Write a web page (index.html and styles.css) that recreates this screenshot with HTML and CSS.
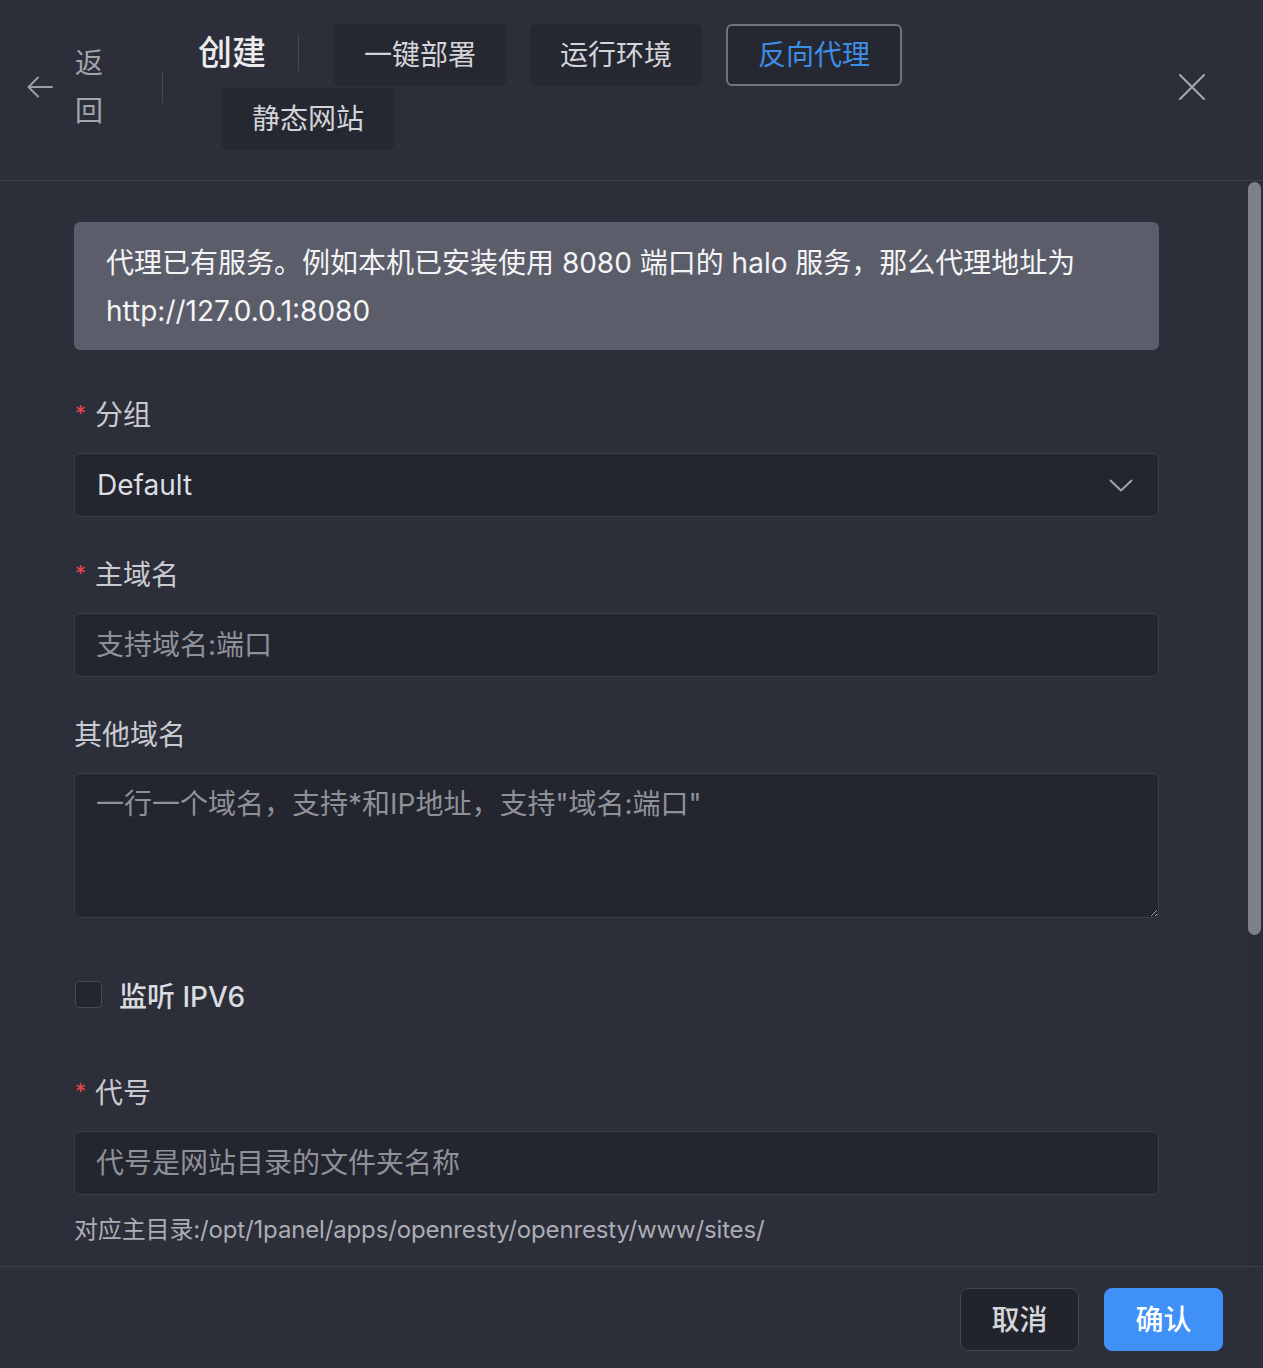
FILE: index.html
```html
<!DOCTYPE html>
<html lang="zh-CN">
<head>
<meta charset="utf-8">
<title>创建 - 反向代理</title>
<link rel="stylesheet" href="styles.css">
</head>
<body>
<div class="dialog">
  <header class="hdr">
    <div class="back">
      <svg class="back-ico" width="26" height="22" viewBox="0 0 26 22"><path d="M25 11 H1.5 M11 1.5 L1.5 11 L11 20.5" fill="none" stroke="currentColor" stroke-width="2" stroke-linecap="round" stroke-linejoin="round"/></svg>
      <span class="back-txt">返回</span>
    </div>
    <span class="vdiv"></span>
    <div class="title-wrap">
      <h1 class="title">创建</h1>
      <span class="vdiv2"></span>
      <button class="tab">一键部署</button>
      <button class="tab">运行环境</button>
      <button class="tab active">反向代理</button>
      <button class="tab">静态网站</button>
    </div>
    <button class="close" aria-label="关闭">
      <svg width="26" height="26" viewBox="0 0 26 26"><path d="M1 1 L25 25 M25 1 L1 25" fill="none" stroke="currentColor" stroke-width="2" stroke-linecap="round"/></svg>
    </button>
  </header>

  <main class="main">
    <div class="content">
      <div class="alert">代理已有服务。例如本机已安装使用 8080 端口的 halo 服务，那么代理地址为 http://127.0.0.1:8080</div>

      <div class="item">
        <div class="label"><span class="req">*</span>分组</div>
        <div class="select">
          <span class="sel-val">Default</span>
          <svg class="chev" width="24" height="13" viewBox="0 0 24 13"><path d="M1.5 1.5 L12 11.5 L22.5 1.5" fill="none" stroke="currentColor" stroke-width="2" stroke-linecap="round" stroke-linejoin="round"/></svg>
        </div>
      </div>

      <div class="item">
        <div class="label"><span class="req">*</span>主域名</div>
        <input class="input" type="text" placeholder="支持域名:端口">
      </div>

      <div class="item">
        <div class="label">其他域名</div>
        <textarea class="textarea" placeholder="一行一个域名，支持*和IP地址，支持&quot;域名:端口&quot;"></textarea>
      </div>

      <div class="item check-row">
        <span class="checkbox"></span>
        <span class="check-label">监听 IPV6</span>
      </div>

      <div class="item">
        <div class="label"><span class="req">*</span>代号</div>
        <input class="input" type="text" placeholder="代号是网站目录的文件夹名称">
        <div class="help">对应主目录:/opt/1panel/apps/openresty/openresty/www/sites/</div>
      </div>
    </div>
    <div class="scrollbar"><div class="thumb"></div></div>
  </main>

  <footer class="ftr">
    <button class="btn cancel">取消</button>
    <button class="btn primary">确认</button>
  </footer>
</div>
</body>
</html>
```

FILE: styles.css
```css
* { box-sizing: border-box; }
html, body { margin: 0; padding: 0; }
body {
  background: #2c2e3a;
  font-family: Inter, "Noto Sans CJK SC", "Noto Sans", sans-serif;
  color: #d4d5d9;
}
.dialog {
  width: 1263px;
  height: 1368px;
  display: flex;
  flex-direction: column;
  background: #2c2e3a;
  overflow: hidden;
}

/* Header */
.hdr {
  height: 181px;
  flex: 0 0 181px;
  display: flex;
  align-items: center;
  padding-left: 27px;
  padding-bottom: 6px;
  border-bottom: 1px solid #3c3f4a;
}
.back {
  display: flex;
  align-items: center;
  color: #9c9ea5;
}
.back-ico { display: block; }
.back-txt {
  width: 28px;
  margin-left: 22px;
  font-size: 28px;
  line-height: 48px;
  color: #a3a5ab;
}
.vdiv {
  width: 1px;
  height: 31px;
  margin-left: 59px;
  background: #454853;
}
.title-wrap {
  width: 740px;
  margin-left: 35px;
  display: flex;
  flex-wrap: wrap;
  align-items: center;
  row-gap: 2px;
  align-self: flex-start;
  margin-top: 24px;
}
.title {
  margin: 0;
  font-size: 34px;
  font-weight: 500;
  line-height: 58px;
  height: 62px;
  color: #ececee;
  padding-bottom: 4px;
}
.vdiv2 {
  width: 1px;
  height: 37px;
  margin-left: 32px;
  margin-right: 11px;
  margin-top: -6px;
  background: #454853;
}
.tab {
  height: 62px;
  padding: 0 29px;
  margin-left: 24px;
  border: 1px solid #252731;
  border-radius: 6px;
  background: #252731;
  color: #d3d4d8;
  font-family: inherit;
  font-size: 28px;
  line-height: 1;
}
.tab.active {
  border: 2px solid #70737e;
  padding: 0 30px;
  color: #3e8ee6;
}
.close {
  margin-left: auto;
  margin-right: 58px;
  padding: 0;
  border: 0;
  background: transparent;
  color: #a6a8ae;
  display: flex;
}

/* Main */
.main {
  flex: 0 0 1085px;
  height: 1085px;
  display: flex;
  overflow: hidden;
}
.content {
  flex: 1;
  padding: 41px 88px 0 74px;
  overflow: hidden;
}
.scrollbar {
  width: 16px;
  flex: 0 0 16px;
  background: #2a2c37;
  padding: 1px 2px 0 1px;
}
.thumb {
  height: 753px;
  border-radius: 7px;
  background: #7c808b;
}

.alert {
  background: #5b5d6a;
  border-radius: 6px;
  padding: 17px 32px 15px;
  font-size: 28px;
  line-height: 48px;
  color: #f4f4f5;
  margin-bottom: 43px;
}

.item { margin-bottom: 36px; }
.label {
  height: 44px;
  font-size: 28px;
  line-height: 44px;
  margin-bottom: 16px;
  color: #c9cacf;
  overflow: hidden;
}
.req {
  color: #e5484d;
  font-size: 22px;
  line-height: 1;
  margin-left: 1px;
  margin-right: 9px;
  vertical-align: 4px;
}
.input, .select, .textarea {
  display: block;
  width: 100%;
  background: #23252f;
  border: 1px solid #3b3e49;
  border-radius: 6px;
  font-family: inherit;
  font-size: 28px;
  color: #dcdde0;
  outline: none;
}
.input {
  height: 64px;
  padding: 0 21px;
}
.select {
  height: 64px;
  padding: 0 25px 0 22px;
  display: flex;
  align-items: center;
  justify-content: space-between;
}
.sel-val { color: #dcdde0; }
.chev { color: #a1a3aa; display: block; }
.textarea {
  height: 145px;
  padding: 10px 21px;
  line-height: 40px;
  resize: vertical;
}
.input::placeholder, .textarea::placeholder { color: #8f9199; opacity: 1; }

.check-row {
  height: 81px;
  display: flex;
  align-items: center;
}
.checkbox {
  width: 27px;
  height: 27px;
  margin-left: 1px;
  border: 1px solid #464955;
  border-radius: 4px;
  background: #23252f;
}
.check-label {
  margin-left: 17px;
  font-size: 28px;
  color: #dadbdf;
  font-weight: 500;
}
.help {
  margin-top: 17px;
  font-size: 24px;
  letter-spacing: -0.15px;
  line-height: 36px;
  color: #abadb3;
}

/* Footer */
.ftr {
  flex: 1;
  border-top: 1px solid #3c3f4a;
  display: flex;
  justify-content: flex-end;
  align-items: flex-start;
  gap: 25px;
  padding: 21px 40px 0 0;
}
.btn {
  width: 119px;
  height: 63px;
  border-radius: 8px;
  font-family: inherit;
  font-size: 28px;
  font-weight: 500;
  line-height: 1;
}
.cancel {
  background: #22242d;
  border: 1px solid #42444f;
  color: #d6d7db;
}
.primary {
  background: #4091f7;
  border: 1px solid #4091f7;
  color: #ffffff;
}
```
